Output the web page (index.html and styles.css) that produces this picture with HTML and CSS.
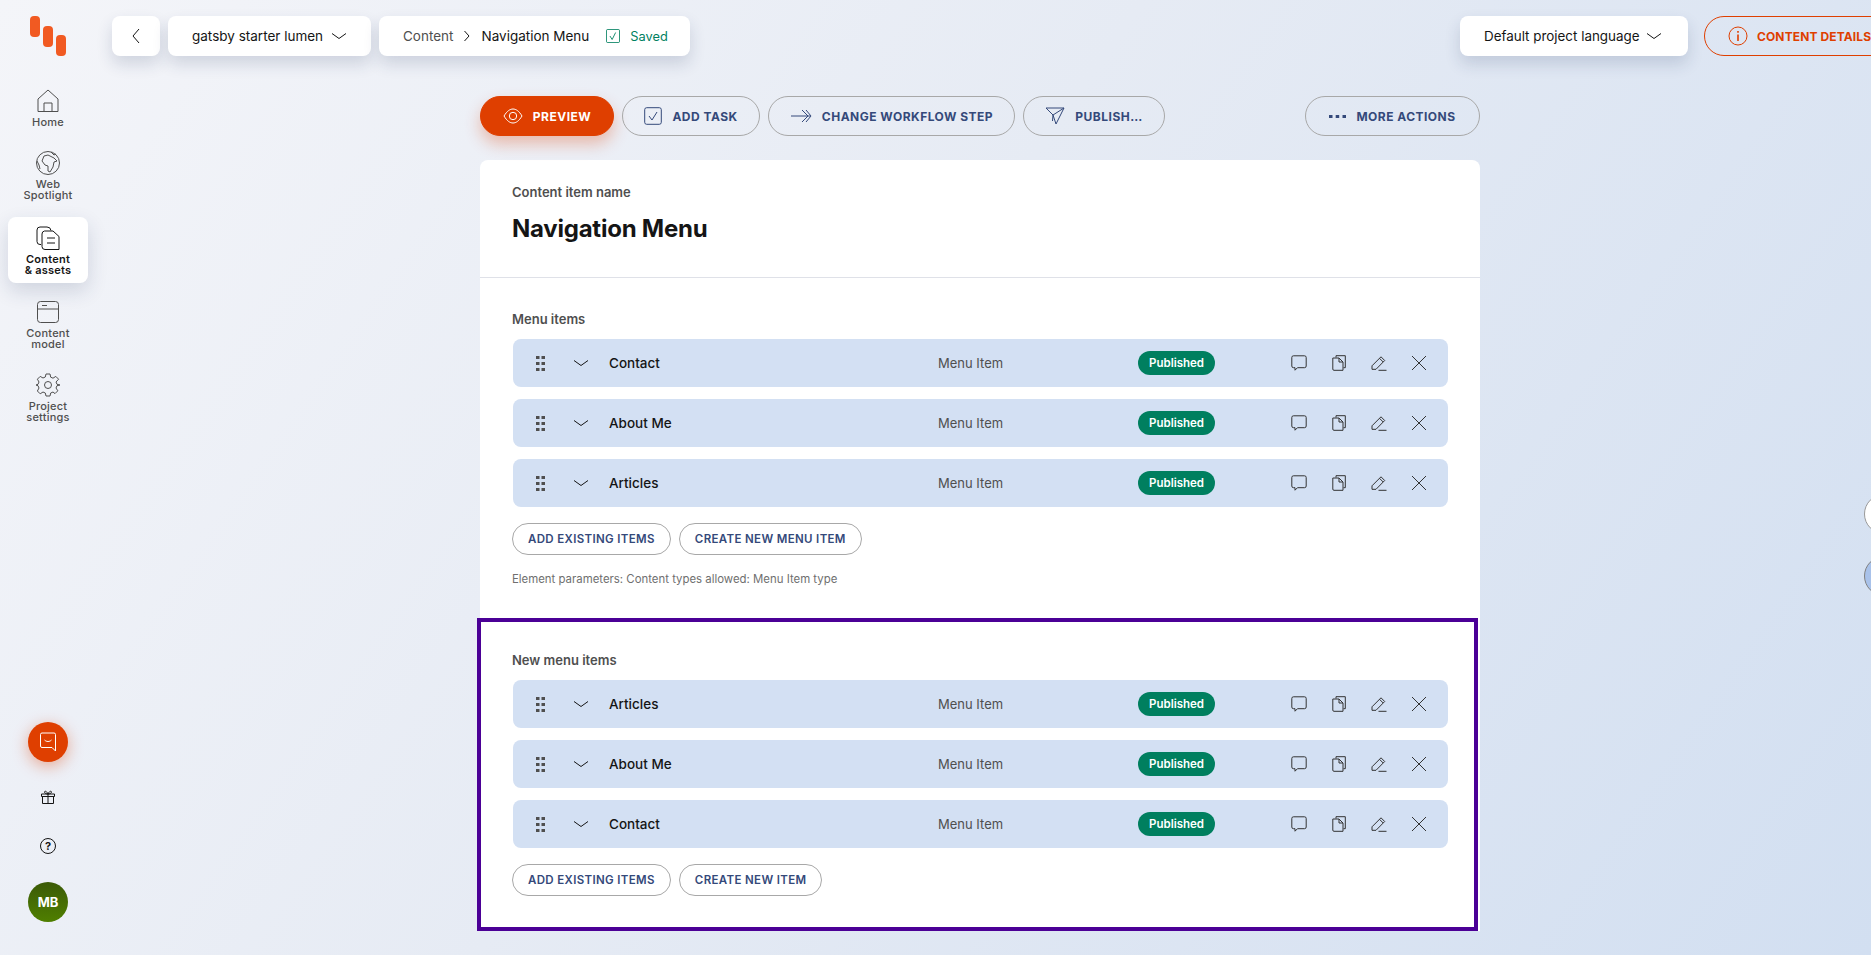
FILE: index.html
```html
<!DOCTYPE html>
<html>
	<head>
		<meta charset="UTF-8">
		<title>Navigation Menu</title>
		<link rel="stylesheet" href="styles.css">
	</head>
	<body>
		<svg class="sprites" width="0" height="0">
			<symbol id="i-chev-down" viewBox="0 0 16 16"><path d="M1 5.500l7 5 7-5"/></symbol>
			<symbol id="i-comment" viewBox="0 0 16 16"><path d="M2.500 .8h11A1.700 1.700 0 0 1 15.200 2.500v8.500a1.700 1.700 0 0 1-1.700 1.700H6.500l-2.500 2.500v-2.500H2.500A1.700 1.700 0 0 1 .8 11V2.500A1.700 1.700 0 0 1 2.500 .8z"/></symbol>
			<symbol id="i-doc" viewBox="0 0 16 16"><path d="M5 2.500V.7h9.300v12H12.500M1.800 3H8l4 4v8.300H3a1.200 1.200 0 0 1-1.200-1.200zM8 3v4h4"/></symbol>
			<symbol id="i-pencil" viewBox="0 0 16 16"><path d="M1 10.800L10 1.800l3.700 3.700-8.700 8.800H1zM8.500 3.300L12.200 7M7.500 15.300h8"/></symbol>
			<symbol id="i-close" viewBox="0 0 16 16"><path d="M1 1l14 14M15 1L1 15"/></symbol>
			<symbol id="i-drag" viewBox="0 0 9 15"><path class="fill" d="M0 0h3.500v3H0zM5.500 0H9v3H5.500zM0 6h3.500v3H0zM5.500 6H9v3H5.500zM0 12h3.500v3H0zM5.500 12H9v3H5.500z"/></symbol>
		</svg>

		<div class="app">
			<nav class="sidebar">
				<svg class="logo" width="36" height="40" viewBox="0 0 36 40">
					<rect x="0" y="0" width="10" height="21" rx="4"/>
					<rect x="13" y="10" width="10" height="21" rx="4"/>
					<rect x="26" y="19" width="10" height="21" rx="4"/>
				</svg>
				<ul class="nav">
					<li class="nav-item">
						<svg width="24" height="24" viewBox="0 0 24 24"><path d="M2 22.500V10L12 1l10 9v12.500zM8 22.500V14h8v8.500"/></svg>
						<span>Home</span>
					</li>
					<li class="nav-item nav-spot">
						<svg width="24" height="24" viewBox="0 0 24 24"><circle cx="12" cy="12" r="11.500"/><path d="M8 5l4-1 6 3 3 3-3 1-1 5-3 5-2-1 0-5-3-1-3-4zM15 1l3 3 2-1M1 10l2 4 1 4"/></svg>
						<span>Web<br>Spotlight</span>
					</li>
					<li class="nav-item active">
						<svg width="24" height="24" viewBox="0 0 24 24"><path d="M5 18.500H4A3 3 0 0 1 1 15.500V4a3 3 0 0 1 3-3h7a4 4 0 0 1 4 3.500"/><path d="M8.500 5H17l6 5.500v13H9a3 3 0 0 1-3-3V8a3 3 0 0 1 2.500-3zM11 12h8M11 17h8"/></svg>
						<span>Content<br>&amp; assets</span>
					</li>
					<li class="nav-item">
						<svg width="24" height="24" viewBox="0 0 24 24"><rect x="1.500" y="1.500" width="21" height="21" rx="3"/><path d="M1.500 9h21M6 5.500h5"/></svg>
						<span>Content<br>model</span>
					</li>
					<li class="nav-item">
						<svg width="24" height="24" viewBox="0 0 24 24"><circle cx="12" cy="12" r="3.500"/><path d="M10 1h4l.7 3.200 2.300 1 2.800-1.800 2.800 2.800L20 9l1 2.300 3 .7-3 .7-1 2.300 1.800 2.800-2.800 2.800L17 19l-2.300 1-.7 3h-4l-.7-3L7 19l-2.800 1.800-2.800-2.800L3 15l-1-2.300-2-.7 2-.7 1-2.300-1.600-2.800 2.800-2.800L7 5l2.300-1z"/></svg>
						<span>Project<br>settings</span>
					</li>
				</ul>
				<div class="nav-bottom">
					<div class="round chat">
						<svg width="18" height="20" viewBox="0 0 18 20"><path d="M3 1h12a1.500 1.500 0 0 1 1.500 1.500V19L13 15.500H3A1.500 1.500 0 0 1 1.500 14V2.500A1.500 1.500 0 0 1 3 1zM5.500 8c2 2 5 2 7 0"/></svg>
					</div>
					<svg class="gift" width="14" height="14" viewBox="0 0 14 14"><path d="M1.500 6.500v7h11v-7M.5 4h13v2.500H.5zM7 4v9.500M7 4C5 4 3.500 3 3.500 2S5.500 .5 7 4c1.500-3.500 3.500-3 3.500-2S9 4 7 4z"/></svg>
					<div class="help">?</div>
					<div class="round avatar">MB</div>
				</div>
			</nav>

			<main class="main">
				<header class="topbar">
					<div class="tile tile-back">
						<svg class="stroke" width="10" height="16" viewBox="0 0 10 16"><path d="M8 1L2 8l6 7"/></svg>
					</div>
					<div class="tile tile-project">
						<span>gatsby starter lumen</span>
						<svg class="chev"><use href="#i-chev-down"/></svg>
					</div>
					<div class="tile tile-crumbs">
						<span class="crumb">Content</span>
						<svg class="stroke" width="8" height="12" viewBox="0 0 8 12"><path d="M1.500 1L6 6l-4.500 5"/></svg>
						<span>Navigation Menu</span>
						<svg class="saved-icon" width="14" height="14" viewBox="0 0 16 16"><rect x=".5" y=".5" width="15" height="15" rx="1.500"/><path d="M4.500 8l2.500 4 4-8"/></svg>
						<span class="saved">Saved</span>
					</div>
					<div class="tile tile-lang">
						<span>Default project language</span>
						<svg class="chev"><use href="#i-chev-down"/></svg>
					</div>
					<div class="btn btn-details">
						<svg width="20" height="20" viewBox="0 0 20 20"><circle cx="10" cy="10" r="9"/><path d="M10 8.500V15M10 5v1.800" stroke-width="1.600"/></svg>
						CONTENT DETAILS
					</div>
				</header>

				<div class="toolbar">
					<div class="btn btn-primary">
						<svg width="20" height="16" viewBox="0 0 20 16"><path d="M1 8c3-5 6-7 9-7s6 2 9 7c-3 5-6 7-9 7s-6-2-9-7z"/><circle cx="10" cy="8" r="3.700"/></svg>
						PREVIEW
					</div>
					<div class="btn">
						<svg width="18" height="18" viewBox="0 0 18 18"><rect x=".7" y=".7" width="16.600" height="16.600" rx="2"/><path d="M5 9l3 4 5-8"/></svg>
						ADD TASK
					</div>
					<div class="btn">
						<svg width="22" height="14" viewBox="0 0 22 14"><path d="M1 7h19M12 1l6 6-6 6M16 1l5 6-5 6"/></svg>
						CHANGE WORKFLOW STEP
					</div>
					<div class="btn">
						<svg width="20" height="20" viewBox="0 0 20 20"><path d="M1 2h18L11 18 8 9zM8 9l-.5 6M8 9l11-7"/></svg>
						PUBLISH…
					</div>
					<div class="btn btn-more">
						<svg width="17" height="3" viewBox="0 0 17 3"><path class="fill" d="M0 0h3.500v3H0zM6.700 0h3.500v3H6.700zM13.500 0H17v3h-3.500z"/></svg>
						MORE ACTIONS
					</div>
				</div>

				<div class="card">
					<div class="card-head">
						<div class="label">Content item name</div>
						<h1>Navigation Menu</h1>
					</div>

					<section class="element">
						<div class="label">Menu items</div>
						<div class="row">
							<svg class="drag"><use href="#i-drag"/></svg>
							<svg class="chev"><use href="#i-chev-down"/></svg>
							<span class="row-name">Contact</span>
							<span class="row-type">Menu Item</span>
							<span class="badge">Published</span>
							<div class="row-actions">
								<svg><use href="#i-comment"/></svg>
								<svg><use href="#i-doc"/></svg>
								<svg><use href="#i-pencil"/></svg>
								<svg><use href="#i-close"/></svg>
							</div>
						</div>
						<div class="row">
							<svg class="drag"><use href="#i-drag"/></svg>
							<svg class="chev"><use href="#i-chev-down"/></svg>
							<span class="row-name">About Me</span>
							<span class="row-type">Menu Item</span>
							<span class="badge">Published</span>
							<div class="row-actions">
								<svg><use href="#i-comment"/></svg>
								<svg><use href="#i-doc"/></svg>
								<svg><use href="#i-pencil"/></svg>
								<svg><use href="#i-close"/></svg>
							</div>
						</div>
						<div class="row">
							<svg class="drag"><use href="#i-drag"/></svg>
							<svg class="chev"><use href="#i-chev-down"/></svg>
							<span class="row-name">Articles</span>
							<span class="row-type">Menu Item</span>
							<span class="badge">Published</span>
							<div class="row-actions">
								<svg><use href="#i-comment"/></svg>
								<svg><use href="#i-doc"/></svg>
								<svg><use href="#i-pencil"/></svg>
								<svg><use href="#i-close"/></svg>
							</div>
						</div>
						<div class="element-btns">
							<div class="btn btn-small">ADD EXISTING ITEMS</div>
							<div class="btn btn-small">CREATE NEW MENU ITEM</div>
						</div>
						<div class="hint">Element parameters: Content types allowed: Menu Item type</div>
					</section>

					<section class="element element-new">
						<div class="label">New menu items</div>
						<div class="row">
							<svg class="drag"><use href="#i-drag"/></svg>
							<svg class="chev"><use href="#i-chev-down"/></svg>
							<span class="row-name">Articles</span>
							<span class="row-type">Menu Item</span>
							<span class="badge">Published</span>
							<div class="row-actions">
								<svg><use href="#i-comment"/></svg>
								<svg><use href="#i-doc"/></svg>
								<svg><use href="#i-pencil"/></svg>
								<svg><use href="#i-close"/></svg>
							</div>
						</div>
						<div class="row">
							<svg class="drag"><use href="#i-drag"/></svg>
							<svg class="chev"><use href="#i-chev-down"/></svg>
							<span class="row-name">About Me</span>
							<span class="row-type">Menu Item</span>
							<span class="badge">Published</span>
							<div class="row-actions">
								<svg><use href="#i-comment"/></svg>
								<svg><use href="#i-doc"/></svg>
								<svg><use href="#i-pencil"/></svg>
								<svg><use href="#i-close"/></svg>
							</div>
						</div>
						<div class="row">
							<svg class="drag"><use href="#i-drag"/></svg>
							<svg class="chev"><use href="#i-chev-down"/></svg>
							<span class="row-name">Contact</span>
							<span class="row-type">Menu Item</span>
							<span class="badge">Published</span>
							<div class="row-actions">
								<svg><use href="#i-comment"/></svg>
								<svg><use href="#i-doc"/></svg>
								<svg><use href="#i-pencil"/></svg>
								<svg><use href="#i-close"/></svg>
							</div>
						</div>
						<div class="element-btns">
							<div class="btn btn-small">ADD EXISTING ITEMS</div>
							<div class="btn btn-small">CREATE NEW ITEM</div>
						</div>
					</section>
				</div>
			</main>

			<div class="side-dot side-dot-white"></div>
			<div class="side-dot side-dot-blue"></div>
		</div>
	</body>
</html>
```

FILE: styles.css
```css
*{margin:0;padding:0;box-sizing:border-box;}
ul,li{list-style:none;}
html,body{height:100%;overflow:hidden;}
body{font-family:Inter,"Noto Sans",sans-serif;font-size:14px;color:#151515;}
svg{display:block;flex:none;fill:none;stroke:currentColor;stroke-width:1;}
svg .fill{fill:currentColor;stroke:none;}
.sprites{position:absolute;}

.app{position:relative;display:flex;height:955px;overflow:hidden;background:linear-gradient(125deg,#f4f5f9 0%,#e6ebf4 45%,#d2dff1 100%);}

/* sidebar */
.sidebar{width:96px;flex:none;display:flex;flex-direction:column;align-items:center;padding-top:16px;}
.logo{fill:#f15a22;stroke:none;}
.nav{margin-top:32px;display:flex;flex-direction:column;align-items:center;}
.nav-item{width:80px;display:flex;flex-direction:column;align-items:center;padding:1px 0 6px;margin-bottom:16px;font-size:11px;line-height:11px;font-weight:500;letter-spacing:.02em;color:#4f4f4f;text-align:center;}
.nav-item svg{margin-bottom:4px;}
.nav-item.active{height:66px;padding-top:9px;background:#fff;border-radius:8px;color:#151515;font-weight:600;box-shadow:0 8px 20px rgba(33,48,91,.16);}
.nav-spot{margin-bottom:10px;}
.nav-bottom{margin-top:auto;padding-bottom:33px;display:flex;flex-direction:column;align-items:center;}
.round{width:40px;height:40px;border-radius:50%;display:flex;align-items:center;justify-content:center;}
.chat{background:#df3f00;color:#fff;box-shadow:0 4px 16px rgba(223,63,0,.4);}
.gift{margin-top:28px;color:#151515;}
.help{width:16px;height:16px;margin-top:34px;border:1px solid #151515;border-radius:50%;font-size:11px;line-height:14px;font-weight:700;text-align:center;}
.avatar{margin-top:28px;background:linear-gradient(#3b5a07,#4f7f00);color:#fff;font-size:13px;font-weight:700;}

/* header */
.main{flex:1;min-width:0;padding-top:16px;}
.topbar{display:flex;align-items:center;gap:8px;margin-left:16px;margin-right:-30px;}
.tile{height:40px;flex:none;display:flex;align-items:center;background:#fff;border-radius:8px;box-shadow:0 8px 16px rgba(33,48,91,.16);font-size:13.500px;}
.tile-back{width:48px;justify-content:center;}
.tile-project{width:203px;padding-left:24px;gap:8px;}
.tile-crumbs{width:311px;padding-left:24px;gap:10px;}
.crumb{color:#4f4f4f;}
.saved-icon{color:#007f5f;margin-left:7px;}
.saved{color:#007f5f;font-size:12.800px;}
.tile-lang{width:228px;margin-left:auto;padding-left:24px;gap:7px;font-size:13.400px;}
.chev{width:16px;height:16px;}
.btn{height:40px;flex:none;display:flex;align-items:center;justify-content:center;gap:10px;border:1px solid #a8a8a8;border-radius:20px;font-size:12px;font-weight:700;letter-spacing:.04em;color:#34497a;white-space:nowrap;}
.btn-details{width:197px;margin-left:8px;padding-left:23px;gap:9px;justify-content:flex-start;border-color:#df3f00;color:#df3f00;letter-spacing:.01em;}

/* toolbar */
.toolbar{display:flex;gap:8px;margin:40px 0 24px 384px;width:1000px;}
.toolbar .btn:nth-child(1){width:134px;}
.toolbar .btn:nth-child(2){width:138px;}
.toolbar .btn:nth-child(3){width:247px;}
.toolbar .btn:nth-child(4){width:142px;}
.btn-primary{background:#df3f00;border-color:#df3f00;color:#fff;box-shadow:0 8px 16px rgba(223,63,0,.3);}
.btn-more{width:175px;margin-left:auto;}

/* card */
.card{width:1000px;margin-left:384px;background:#fff;border-radius:8px 8px 0 0;}
.card-head{height:118px;padding:24px 32px 0;border-bottom:1px solid #dfe1e8;}
h1{margin-top:13px;font-size:24px;line-height:32px;font-weight:700;color:#151515;letter-spacing:-.01em;}
.label{font-size:13px;line-height:16px;font-weight:600;color:#4f4f4f;}
.element{padding:33px 32px 31px 32px;}
.element .label{margin-bottom:12px;}
.row{height:48px;margin:0 0 12px 1px;padding-left:23px;display:grid;grid-template-columns:37px 36px 329px 200px 153px auto;align-items:center;background:#d3e0f3;border-radius:8px;}
.drag{width:9px;height:15px;color:#4f4f4f;}
.row-name{font-size:13.500px;font-weight:500;color:#151515;}
.row-type{color:#4f4f4f;font-size:13px;}
.badge{width:77px;height:24px;border-radius:12px;background:#007f5f;color:#fff;font-size:11.500px;line-height:24px;font-weight:600;text-align:center;}
.row-actions{display:flex;gap:24px;color:#333;}
.row-actions svg{width:16px;height:16px;}
.element-btns{display:flex;gap:8px;margin-top:16px;}
.btn-small{height:32px;padding:0 15px;font-size:11.500px;font-weight:600;letter-spacing:.03em;}
.hint{margin-top:16px;font-size:11.400px;line-height:16px;color:#6f6f6f;}
.element-new{width:1001px;margin-left:-3px;padding:30px 26px 31px 31px;border:4px solid #4b0096;background:#fff;}

.side-dot{position:absolute;left:1864px;width:40px;height:40px;border-radius:50%;border:1px solid #999;}
.side-dot-white{top:494px;background:#fff;}
.side-dot-blue{top:556px;background:#a9c2ea;border-color:#808080;}
```
